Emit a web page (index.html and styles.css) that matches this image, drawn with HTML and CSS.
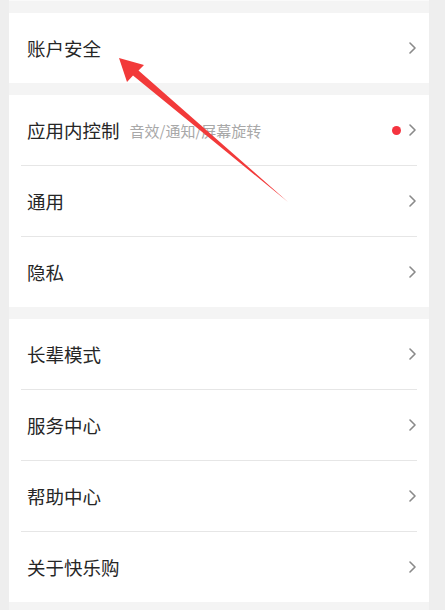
FILE: index.html
```html
<!DOCTYPE html>
<html lang="zh-CN">
<head>
<meta charset="utf-8">
<title>设置</title>
<link rel="stylesheet" href="styles.css">
</head>
<body>
<div class="column">
  <div class="prev-edge"></div>
  <section class="card">
    <div class="row"><span class="label">账户安全</span><span class="end"><svg class="chev" width="7" height="12" viewBox="0 0 7 12"><path d="M1 1 L6 6 L1 11" fill="none" stroke="#8a8a8a" stroke-width="1.6" stroke-linecap="round" stroke-linejoin="round"/></svg></span></div>
  </section>
  <section class="card">
    <div class="row"><span class="label">应用内控制</span><span class="sub">音效/通知/屏幕旋转</span><span class="end"><span class="dot"></span><svg class="chev" width="7" height="12" viewBox="0 0 7 12"><path d="M1 1 L6 6 L1 11" fill="none" stroke="#8a8a8a" stroke-width="1.6" stroke-linecap="round" stroke-linejoin="round"/></svg></span></div>
    <div class="divider"></div>
    <div class="row"><span class="label">通用</span><span class="end"><svg class="chev" width="7" height="12" viewBox="0 0 7 12"><path d="M1 1 L6 6 L1 11" fill="none" stroke="#8a8a8a" stroke-width="1.6" stroke-linecap="round" stroke-linejoin="round"/></svg></span></div>
    <div class="divider"></div>
    <div class="row"><span class="label">隐私</span><span class="end"><svg class="chev" width="7" height="12" viewBox="0 0 7 12"><path d="M1 1 L6 6 L1 11" fill="none" stroke="#8a8a8a" stroke-width="1.6" stroke-linecap="round" stroke-linejoin="round"/></svg></span></div>
  </section>
  <section class="card">
    <div class="row"><span class="label">长辈模式</span><span class="end"><svg class="chev" width="7" height="12" viewBox="0 0 7 12"><path d="M1 1 L6 6 L1 11" fill="none" stroke="#8a8a8a" stroke-width="1.6" stroke-linecap="round" stroke-linejoin="round"/></svg></span></div>
    <div class="divider"></div>
    <div class="row"><span class="label">服务中心</span><span class="end"><svg class="chev" width="7" height="12" viewBox="0 0 7 12"><path d="M1 1 L6 6 L1 11" fill="none" stroke="#8a8a8a" stroke-width="1.6" stroke-linecap="round" stroke-linejoin="round"/></svg></span></div>
    <div class="divider"></div>
    <div class="row"><span class="label">帮助中心</span><span class="end"><svg class="chev" width="7" height="12" viewBox="0 0 7 12"><path d="M1 1 L6 6 L1 11" fill="none" stroke="#8a8a8a" stroke-width="1.6" stroke-linecap="round" stroke-linejoin="round"/></svg></span></div>
    <div class="divider"></div>
    <div class="row"><span class="label">关于快乐购</span><span class="end"><svg class="chev" width="7" height="12" viewBox="0 0 7 12"><path d="M1 1 L6 6 L1 11" fill="none" stroke="#8a8a8a" stroke-width="1.6" stroke-linecap="round" stroke-linejoin="round"/></svg></span></div>
  </section>
</div>
<svg class="arrow" width="445" height="610" viewBox="0 0 445 610">
  <polygon points="119,58 144,65 138.5,70.5 288,202 133,75.5 127,82" fill="#f23a3a"/>
</svg>
</body>
</html>
```

FILE: styles.css
```css
html, body {
  margin: 0;
  padding: 0;
}
body {
  background: #eeeeee;
  width: 445px;
  height: 610px;
  overflow: hidden;
  position: relative;
  font-family: "Noto Sans CJK SC", "Noto Sans", sans-serif;
}
.column {
  margin-left: 9px;
  width: 420px;
  min-height: 610px;
  background: #f4f4f4;
  display: flex;
  flex-direction: column;
  gap: 12px;
}
.prev-edge {
  height: 1px;
  background: #fafafa;
}
.card {
  background: #ffffff;
  display: flex;
  flex-direction: column;
}
.row {
  height: 70px;
  display: flex;
  align-items: center;
  padding: 0 13px 0 18px;
}
.label {
  font-size: 18.5px;
  color: #262626;
  line-height: 1;
}
.sub {
  font-size: 15px;
  color: #a8a8a8;
  margin-left: 10px;
  line-height: 1;
}
.end {
  margin-left: auto;
  display: flex;
  align-items: center;
  gap: 8px;
}
.dot {
  width: 9px;
  height: 9px;
  border-radius: 50%;
  background: #f5333f;
}
.chev {
  display: block;
}
.divider {
  height: 1px;
  background: #e6e6e6;
  margin: 0 12px;
}
.arrow {
  position: absolute;
  left: 0;
  top: 0;
  pointer-events: none;
}
```
